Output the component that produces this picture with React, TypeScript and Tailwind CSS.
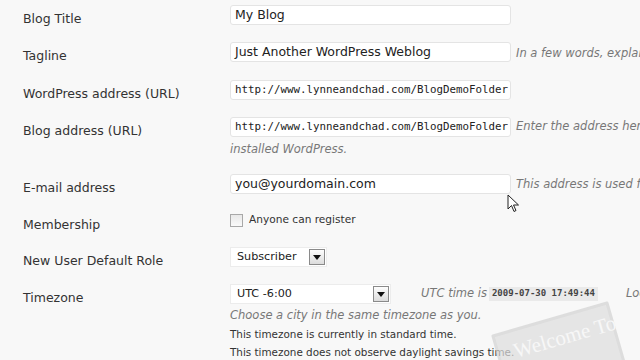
import React from "react";

const label = "text-[12.5px] text-[#333] leading-4 pt-[6px] pl-[23px] w-[230px] shrink-0";
const input =
  "h-[20px] w-[281px] shrink-0 bg-white border border-[#e4e4e4] rounded-[3px] px-[4px] flex items-center text-[12.5px] text-[#222] whitespace-nowrap overflow-hidden";
const mono = "font-['DejaVu_Sans_Mono',monospace] text-[10.8px] text-[#222]";
const desc = "italic text-[11.5px] text-[#777] whitespace-nowrap";

function Arrow() {
  return (
    <div className="w-[16px] h-[16px] border border-[#8a8a8a] bg-gradient-to-b from-[#fdfdfd] to-[#dcdcdc] flex items-center justify-center">
      <svg width="8" height="5" viewBox="0 0 8 5">
        <path d="M0 0 L8 0 L4 5 Z" fill="#111" />
      </svg>
    </div>
  );
}

export default function App() {
  return (
    <div className="relative w-[640px] h-[360px] overflow-hidden bg-[#f8f8f8] font-['DejaVu_Sans',Verdana,sans-serif]">
      <div className="flex flex-col pt-[5px]">
        {/* Blog title */}
        <div className="flex h-[37px]">
          <div className={label}>Blog Title</div>
          <div className={input}>My Blog</div>
        </div>
        {/* Tagline */}
        <div className="flex h-[38px]">
          <div className={label}>Tagline</div>
          <div className={input}>Just Another WordPress Weblog</div>
          <div className={`${desc} ml-[5px] mt-[3px]`}>In a few words, explain what this blog is about.</div>
        </div>
        {/* WordPress address */}
        <div className="flex h-[37px]">
          <div className={label}>WordPress address (URL)</div>
          <div className={`${input} px-[3px]`}>
            <span className={mono}>http://www.lynneandchad.com/BlogDemoFolder</span>
          </div>
        </div>
        {/* Blog address */}
        <div className="flex h-[57px]">
          <div className={label}>Blog address (URL)</div>
          <div className="flex flex-col">
            <div className="flex">
              <div className={`${input} px-[3px]`}>
                <span className={mono}>http://www.lynneandchad.com/BlogDemoFolder</span>
              </div>
              <div className={`${desc} ml-[5px] mt-[1px]`}>
                Enter the address here if you want your blog homepage to be different from the directory you
              </div>
            </div>
            <div className={`${desc} mt-[4px]`}>installed WordPress.</div>
          </div>
        </div>
        {/* Email */}
        <div className="flex h-[37px]">
          <div className={label}>E-mail address</div>
          <div className={input}>you@yourdomain.com</div>
          <div className={`${desc} ml-[5px] mt-[2px]`}>This address is used for admin purposes.</div>
        </div>
        {/* Membership */}
        <div className="flex h-[36px]">
          <div className={label}>Membership</div>
          <div className="flex items-center gap-[6px] h-[16px] mt-[1px]">
            <div className="w-[13px] h-[13px] border border-[#a8a8a8] bg-gradient-to-b from-[#e8e8e8] to-[#fafafa]" />
            <span className="text-[10.6px] text-[#333]">Anyone can register</span>
          </div>
        </div>
        {/* Role */}
        <div className="flex h-[37px]">
          <div className={label}>New User Default Role</div>
          <div className="h-[20px] w-[97px] bg-white border border-[#ececec] flex items-center justify-between pl-[6px] pr-[1px] text-[11.2px] text-[#222]">
            <span>Subscriber</span>
            <Arrow />
          </div>
        </div>
        {/* Timezone */}
        <div className="flex">
          <div className={label}>Timezone</div>
          <div className="flex flex-col">
            <div className="flex items-center">
              <div className="h-[20px] w-[161px] shrink-0 bg-white border border-[#ececec] flex items-center justify-between pl-[6px] pr-[1px] text-[11.2px] text-[#222]">
                <span>UTC -6:00</span>
                <Arrow />
              </div>
              <span className={`${desc} ml-[30px]`}>UTC time is</span>
              <span className="ml-[2px] bg-[#eaeaea] px-[3px] h-[14px] flex items-center font-['DejaVu_Sans_Mono',monospace] font-bold text-[9px] text-[#444] whitespace-nowrap">
                2009-07-30 17:49:44
              </span>
              <span className={`${desc} ml-[28px]`}>Local time is</span>
            </div>
            <div className={`${desc} mt-[4px] leading-[15px]`}>Choose a city in the same timezone as you.</div>
            <div className="text-[10.4px] text-[#333] mt-[4px] leading-[15px] whitespace-nowrap">This timezone is currently in standard time.</div>
            <div className="text-[10.4px] text-[#333] mt-[3px] leading-[15px] whitespace-nowrap">
              This timezone does not observe daylight savings time.
            </div>
          </div>
        </div>
      </div>

      {/* watermark sign */}
      <svg className="absolute left-[480px] top-[290px] opacity-70" width="160" height="70" viewBox="0 0 160 70">
        <polygon points="13,46 127,13 152,100 38,133" fill="#dedede" stroke="#d2d2d2" strokeWidth="3" strokeLinejoin="round" />
        <text
          x="36"
          y="68"
          transform="rotate(-16 36 68)"
          fontFamily="Liberation Serif, serif"
          fontSize="21"
          fill="#f7f7f7"
        >
          Welcome To
        </text>
      </svg>

      {/* mouse cursor */}
      <svg className="absolute left-[507px] top-[194px]" width="14" height="20" viewBox="0 0 14 20">
        <path d="M1 1 L1 15 L4.5 11.5 L7 17.5 L9 16.5 L6.5 11 L11.5 11 Z" fill="#fff" stroke="#222" strokeWidth="1" strokeLinejoin="round" />
      </svg>
    </div>
  );
}
